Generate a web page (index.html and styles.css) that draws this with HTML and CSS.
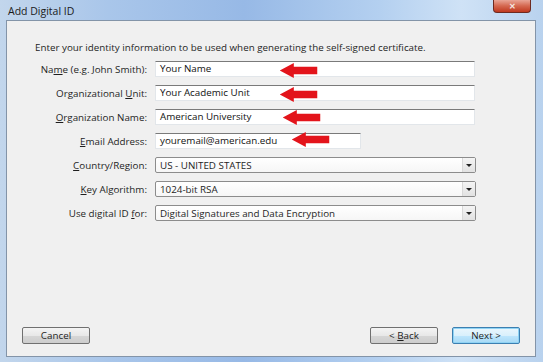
FILE: index.html
```html
<!DOCTYPE html>
<html lang="en">
<head>
  <meta charset="UTF-8">
  <title>Add Digital ID</title>
  <link rel="stylesheet" href="styles.css">
</head>
<body>
  <div class="window">
    <div class="titlebar">
      <span class="title">Add Digital ID</span>
      <div class="close-btn">&#x2715;</div>
    </div>

    <div class="panel">
      <p class="intro">Enter your identity information to be used when generating the self-signed certificate.</p>

      <div class="form">
        <label>Na<u>m</u>e (e.g. John Smith):</label>
        <div class="field"><div class="textbox wide">Your Name</div></div>

        <label>Organizational <u>U</u>nit:</label>
        <div class="field"><div class="textbox wide">Your Academic Unit</div></div>

        <label><u>O</u>rganization Name:</label>
        <div class="field"><div class="textbox wide">American University</div></div>

        <label><u>E</u>mail Address:</label>
        <div class="field"><div class="textbox short">youremail@american.edu</div></div>

        <label><u>C</u>ountry/Region:</label>
        <div class="field"><div class="combo"><span>US - UNITED STATES</span><i class="drop"></i></div></div>

        <label><u>K</u>ey Algorithm:</label>
        <div class="field"><div class="combo"><span>1024-bit RSA</span><i class="drop"></i></div></div>

        <label>Use digital ID <u>f</u>or:</label>
        <div class="field"><div class="combo"><span>Digital Signatures and Data Encryption</span><i class="drop"></i></div></div>
      </div>

      <div class="buttons">
        <button class="btn">Cancel</button>
        <div class="nav">
          <button class="btn">&lt; <u>B</u>ack</button>
          <button class="btn default">Next &gt;</button>
        </div>
      </div>

      <!-- red arrows pointing at the fields -->
      <svg class="arrow a1" viewBox="0 0 40 16"><polygon points="0,8 15,0 15,4 40,4 40,12 15,12 15,16"/></svg>
      <svg class="arrow a2" viewBox="0 0 40 16"><polygon points="0,8 15,0 15,4 40,4 40,12 15,12 15,16"/></svg>
      <svg class="arrow a3" viewBox="0 0 40 16"><polygon points="0,8 15,0 15,4 40,4 40,12 15,12 15,16"/></svg>
      <svg class="arrow a4" viewBox="0 0 40 16"><polygon points="0,8 15,0 15,4 40,4 40,12 15,12 15,16"/></svg>
    </div>
  </div>
</body>
</html>
```

FILE: styles.css
```css
body {
  margin: 0;
  font-family: "Open Sans", "Noto Sans", sans-serif;
  font-size: 9.8px;
  color: #1e1e1e;
}
.window {
  width: 543px;
  height: 362px;
  box-sizing: border-box;
  padding: 0 7px 5px 6px;
  background: linear-gradient(90deg, #c2d6ec 0%, #a9c6ea 20%, #97b9e6 45%, #b4d0f0 70%, #cfe2f6 85%, #b9d2ee 100%);
  display: flex;
  flex-direction: column;
}
.titlebar {
  height: 20px;
  display: flex;
  align-items: flex-start;
  justify-content: space-between;
}
.title {
  font-size: 10.5px;
  color: #1a1a1a;
  padding: 4px 0 0 2px;
}
.close-btn {
  width: 38px;
  height: 13px;
  margin-right: 5px;
  box-sizing: border-box;
  border: 1px solid #6e2a20;
  border-top: none;
  border-radius: 0 0 4px 4px;
  background: linear-gradient(#e9a596, #d4674f 50%, #c0391f);
  color: #f4e6e2;
  font-size: 8px;
  font-weight: bold;
  text-align: center;
  line-height: 12px;
}
.panel {
  position: relative;
  flex: 1;
  background: #f0f0f0;
  border: 1px solid #8394a8;
  display: flex;
  flex-direction: column;
  padding: 19px 0 12px 0;
}
.intro {
  margin: 0 0 5px 28px;
  line-height: 16px;
}
.form {
  display: grid;
  grid-template-columns: 140px 1fr;
  column-gap: 8px;
  row-gap: 8px;
  align-items: center;
}
.form label {
  text-align: right;
}
.field {
  display: flex;
}
.textbox {
  height: 16px;
  box-sizing: border-box;
  background: #fff;
  border: 1px solid #e2e6ea;
  border-top-color: #7a7a7a;
  padding: 0 4px;
  line-height: 14px;
  color: #111;
}
.wide {
  width: 320px;
}
.short {
  width: 206px;
}
.combo {
  width: 321px;
  height: 16px;
  box-sizing: border-box;
  border: 1px solid #8c8c8c;
  border-radius: 2px;
  background: linear-gradient(#ffffff, #f6f6f6);
  display: flex;
  align-items: center;
  justify-content: space-between;
  padding-left: 4px;
}
.drop {
  width: 12px;
  height: 100%;
  background: linear-gradient(#f4f4f4, #e2e2e2);
  border-left: 1px solid #d8d8d8;
  position: relative;
}
.drop::after {
  content: "";
  position: absolute;
  left: 3px;
  top: 6px;
  border-left: 3px solid transparent;
  border-right: 3px solid transparent;
  border-top: 3px solid #222;
}
.buttons {
  margin-top: auto;
  display: flex;
  justify-content: space-between;
  padding: 0 15px 0 15px;
}
.nav {
  display: flex;
  gap: 14px;
}
.btn {
  width: 68px;
  height: 17px;
  box-sizing: border-box;
  border: 1px solid #707070;
  border-radius: 2px;
  background: linear-gradient(#f4f4f4, #e8e8e8 50%, #d6d6d6 51%, #cdcdcd);
  font-family: "Open Sans", "Noto Sans", sans-serif;
  font-size: 9.8px;
  color: #1e1e1e;
  padding: 0;
}
.btn.default {
  border-color: #3c7fb1;
  background: linear-gradient(#eaf6fd, #d9f0fc 50%, #bee6fd 51%, #a7d9f5);
  box-shadow: inset 0 0 0 1px #8fd3f4;
}
.arrow {
  position: absolute;
  width: 39px;
  height: 15px;
  fill: #e3141b;
}
.a1 { left: 272px; top: 42px; }
.a2 { left: 272px; top: 66px; }
.a3 { left: 275px; top: 89px; }
.a4 { left: 284px; top: 111px; }
```
